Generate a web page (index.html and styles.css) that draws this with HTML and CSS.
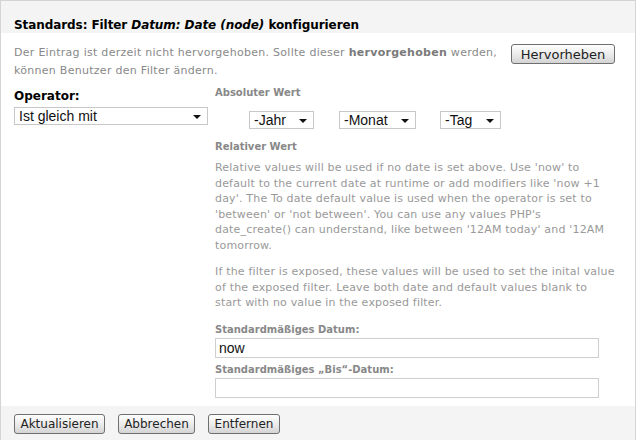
FILE: index.html
```html
<!DOCTYPE html>
<html lang="de">
<head>
<meta charset="utf-8">
<title>Filter konfigurieren</title>
<link rel="stylesheet" href="styles.css">
</head>
<body>
<div class="dialog">
  <div class="header">
    <h1 class="title">Standards: Filter <em>Datum: Date (node)</em> konfigurieren</h1>
  </div>
  <div class="content">
    <div class="expose">
      <p class="expose-text">Der Eintrag ist derzeit nicht hervorgehoben. Sollte dieser <b class="hl">hervorgehoben</b> werden, können Benutzer den Filter ändern.</p>
      <button class="btn btn-expose">Hervorheben</button>
    </div>
    <div class="columns">
      <div class="col-left">
        <label class="op-label">Operator:</label>
        <div class="select select-op"><span>Ist gleich mit</span><i class="arrow"></i></div>
      </div>
      <div class="col-right">
        <div class="sub-label">Absoluter Wert</div>
        <div class="date-selects">
          <div class="select select-year"><span>-Jahr</span><i class="arrow"></i></div>
          <div class="select select-month"><span>-Monat</span><i class="arrow"></i></div>
          <div class="select select-day"><span>-Tag</span><i class="arrow"></i></div>
        </div>
        <div class="sub-label rel-label">Relativer Wert</div>
        <p class="help">Relative values will be used if no date is set above. Use 'now' to default to the current date at runtime or add modifiers like 'now +1 day'. The To date default value is used when the operator is set to 'between' or 'not between'. You can use any values PHP's date_create() can understand, like between '12AM today' and '12AM tomorrow.</p>
        <p class="help help2">If the filter is exposed, these values will be used to set the inital value of the exposed filter. Leave both date and default values blank to start with no value in the exposed filter.</p>
        <div class="sub-label field-label">Standardmäßiges Datum:</div>
        <div class="input">now</div>
        <div class="sub-label field-label field-label2">Standardmäßiges „Bis“-Datum:</div>
        <div class="input"></div>
      </div>
    </div>
  </div>
  <div class="footer">
    <button class="btn btn-update">Aktualisieren</button>
    <button class="btn btn-cancel">Abbrechen</button>
    <button class="btn btn-remove">Entfernen</button>
  </div>
</div>
</body>
</html>
```
FILE: styles.css
```css
html, body {
  margin: 0;
  padding: 0;
  background: #fff;
}
body {
  width: 637px;
  height: 440px;
  overflow: hidden;
  font-family: "DejaVu Sans", Verdana, sans-serif;
}
.dialog {
  width: 636px;
  height: 440px;
  box-sizing: border-box;
  border: 1px solid #d4d4d4;
  border-bottom: none;
  display: flex;
  flex-direction: column;
}
.header {
  background: #f4f4f4;
  height: 32px;
  flex: none;
  padding-left: 13px;
  display: flex;
  align-items: flex-end;
}
.title {
  margin: 0;
  font-size: 12px;
  font-weight: bold;
  color: #000;
  line-height: 16px;
  letter-spacing: -0.08px;
}
.title em { font-style: italic; }
.content {
  flex: 1;
  padding: 0 0 0 13px;
}
.expose {
  display: flex;
  align-items: flex-start;
  padding-top: 11px;
}
.expose-text {
  margin: 0;
  width: 492px;
  font-size: 11px;
  line-height: 18px;
  color: #898989;
  letter-spacing: 0.28px;
}
.hl { color: #7a7a7a; font-weight: bold; }
.btn {
  font-family: "DejaVu Sans", Verdana, sans-serif;
  font-size: 12px;
  color: #222;
  height: 20px;
  padding: 0;
  border: 1px solid #6f6f6f;
  border-radius: 3px;
  background: linear-gradient(#fefefe, #ececec 50%, #d4d4d4);
  line-height: 17px;
  text-align: center;
}
.btn-expose {
  margin: 0 0 0 5px;
  width: 104px;
  font-size: 13px;
}
.columns {
  display: flex;
  margin-top: 6px;
}
.col-left {
  width: 201px;
  flex: none;
}
.op-label {
  display: block;
  font-size: 12px;
  font-weight: bold;
  color: #000;
  line-height: 16px;
  margin-top: 2px;
}
.select {
  box-sizing: border-box;
  display: flex;
  align-items: center;
  justify-content: space-between;
  height: 18px;
  border: 1px solid #c8c8c8;
  background: #fff;
  font-family: "Liberation Sans", Arial, sans-serif;
  font-size: 14px;
  color: #111;
  padding: 0 6px 0 4px;
}
.arrow {
  width: 0;
  height: 0;
  border-left: 4px solid transparent;
  border-right: 4px solid transparent;
  border-top: 4px solid #111;
  margin-top: 2px;
}
.select-op {
  width: 194px;
  margin-top: 3px;
}
.col-right {
  width: 410px;
  flex: none;
}
.sub-label {
  font-size: 10px;
  font-weight: bold;
  color: #888;
  line-height: 14px;
}
.date-selects {
  display: flex;
  padding-left: 34px;
  margin-top: 11px;
}
.select-year { width: 65px; }
.select-month { width: 77px; margin-left: 25px; }
.select-day { width: 61px; margin-left: 24px; }
.rel-label { margin-top: 11px; }
.help {
  margin: 6px 0 0 0;
  font-size: 11px;
  line-height: 15.5px;
  color: #999;
  width: 402px;
  letter-spacing: 0.18px;
}
.help2 { margin-top: 11px; }
.field-label { margin-top: 12px; }
.field-label2 { margin-top: 5px; }
.input {
  box-sizing: border-box;
  width: 384px;
  height: 20px;
  border: 1px solid #cfcfcf;
  margin-top: 1px;
  font-family: "Liberation Sans", Arial, sans-serif;
  font-size: 14px;
  line-height: 18px;
  padding-left: 3px;
  color: #111;
}
.footer {
  background: #f4f4f4;
  height: 34px;
  flex: none;
  display: flex;
  align-items: center;
  padding-left: 13px;
  gap: 13px;
}
.btn-update { width: 91px; margin-top: 2px; }
.btn-cancel { width: 77px; margin-top: 2px; }
.btn-remove { width: 72px; margin-top: 2px; }
```
